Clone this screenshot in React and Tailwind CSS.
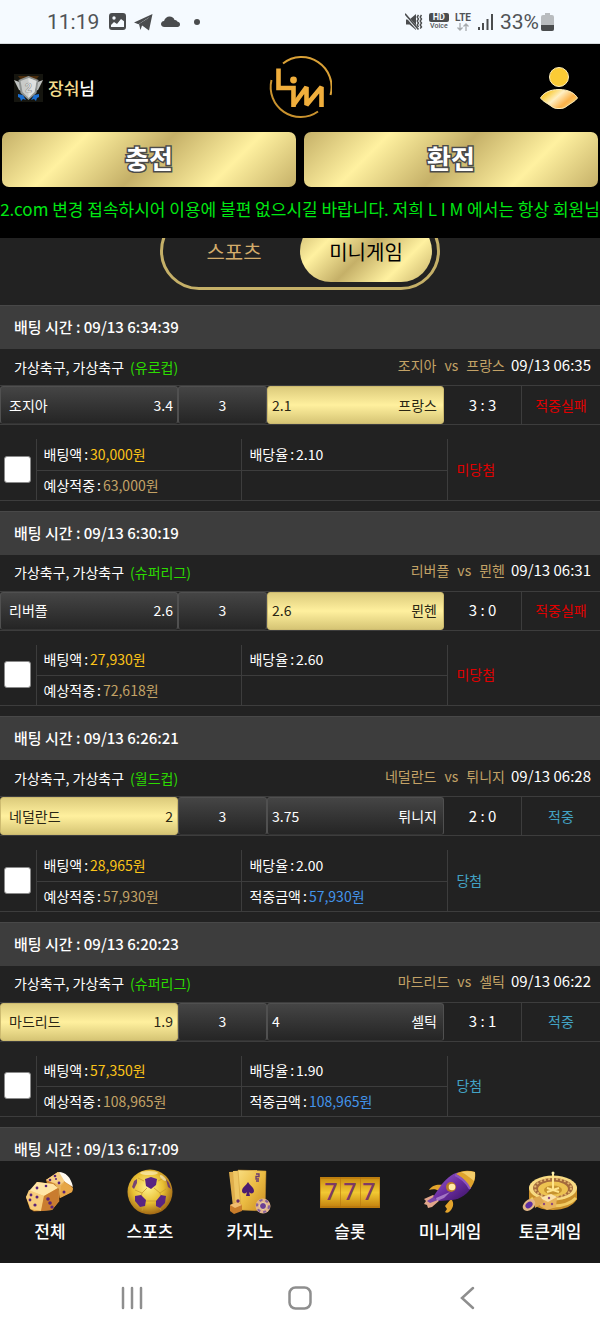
import React, { useState } from 'react';
import clsx from 'clsx';

const bets = [
  {
    id: 1, placedAt: '09/13 6:34:39', league: '유로컵', matchAt: '09/13 06:35',
    home: '조지아', away: '프랑스', homeOdds: '3.4', drawOdds: '3', awayOdds: '2.1',
    pick: 'away', score: '3 : 3', won: false,
    stake: '30,000원', rate: '2.10', expected: '63,000원',
  },
  {
    id: 2, placedAt: '09/13 6:30:19', league: '슈퍼리그', matchAt: '09/13 06:31',
    home: '리버플', away: '뮌헨', homeOdds: '2.6', drawOdds: '3', awayOdds: '2.6',
    pick: 'away', score: '3 : 0', won: false,
    stake: '27,930원', rate: '2.60', expected: '72,618원',
  },
  {
    id: 3, placedAt: '09/13 6:26:21', league: '월드컵', matchAt: '09/13 06:28',
    home: '네덜란드', away: '튀니지', homeOdds: '2', drawOdds: '3', awayOdds: '3.75',
    pick: 'home', score: '2 : 0', won: true,
    stake: '28,965원', rate: '2.00', expected: '57,930원', payout: '57,930원',
  },
  {
    id: 4, placedAt: '09/13 6:20:23', league: '슈퍼리그', matchAt: '09/13 06:22',
    home: '마드리드', away: '셀틱', homeOdds: '1.9', drawOdds: '3', awayOdds: '4',
    pick: 'home', score: '3 : 1', won: true,
    stake: '57,350원', rate: '1.90', expected: '108,965원', payout: '108,965원',
  },
];

function StatusBar() {
  return (
    <div className="h-11 shrink-0 flex items-center justify-between pl-[47px] pr-[46px] bg-[#f5faff] border-b border-[#d5dadd] text-[#505356] font-[Roboto,sans-serif]">
      <div className="flex items-center gap-2">
        <span className="text-[21px] leading-6 mr-[2px]">11:19</span>
        <svg width="17" height="17" viewBox="0 0 17 17">
          <rect x="1" y="1" width="15" height="15" rx="2" fill="none" stroke="#4a4c4e" strokeWidth="2" />
          <path d="M1 1h15v8l-4-3-4 5-3-2-4 4z" fill="#4a4c4e" />
          <circle cx="5" cy="5" r="1.7" fill="#f5faff" />
          <path d="M2.500 13.500 5 10.500l2.500 2 4-5 3 3v3.500h-12z" fill="#f5faff" />
          <path d="M1 15h15" stroke="#4a4c4e" strokeWidth="2" />
        </svg>
        <svg width="19" height="18" viewBox="0 0 19 18" fill="#4a4c4e">
          <path d="M18.500 1 0 9.500l4.500 1.700L15.500 4 7.500 12l7.500 5.500z" />
          <path d="M5 11 16 4 8 12.500 6.500 17z" />
        </svg>
        <svg width="19" height="12" viewBox="0 0 19 12" fill="#4a4c4e">
          <path d="M3.500 11C1 11 0 9.500 0 8s1.200-2.800 3-3C4 2 6 .5 8.500.5S13 2 13.500 4c1.500-.3 2.500.5 2.800 1.600C18 6 19 7 19 8.500S18 11 16.500 11z" />
        </svg>
        <span className="w-[6px] h-[6px] ml-[6px] rounded-full bg-[#4a4c4e]" />
      </div>
      <div className="flex items-center gap-[6px]">
        <svg width="18" height="18" viewBox="0 0 18 18" fill="#4a4c4e">
          <path d="M1 6.500h3.500L11 1v16l-6.500-5.500H1z" />
          <path d="m0 1.500 13 15" stroke="#f5faff" strokeWidth="2.600" />
          <path d="m0 .8 13.500 15.700" stroke="#4a4c4e" strokeWidth="1.600" />
          <path d="m13.500 2-1.300 2 1.300 2-1.300 2 1.300 2-1.300 2 1.300 2M16.500 2l-1.300 2 1.300 2-1.300 2 1.300 2-1.300 2 1.300 2-1.300 1.500" fill="none" stroke="#4a4c4e" strokeWidth="1.400" />
        </svg>
        <div className="flex flex-col items-center">
          <span className="w-5 h-[9px] rounded-xs bg-[#4a4c4e] text-[#f5faff] text-[9px] leading-[9px] font-bold text-center">HD</span>
          <span className="text-[7px] leading-2 font-medium">Voice</span>
        </div>
        <div className="flex flex-col items-center">
          <span className="text-[10px] leading-[10px] font-bold">LTE</span>
          <svg width="12" height="8" viewBox="0 0 12 8" fill="none" stroke="#a6aaad" strokeWidth="1.300">
            <path d="M3 0v7M.5 4.500 3 7l2.500-2.500M9 8V1M6.500 3.500 9 1l2.500 2.500" />
          </svg>
        </div>
        <svg width="17" height="17" viewBox="0 0 17 17" fill="#4a4c4e">
          <rect x="1" y="14" width="2" height="3" />
          <rect x="5" y="10" width="2" height="7" />
          <rect x="9.500" y="6" width="2" height="11" />
          <rect x="14" y="1" width="2" height="16" />
        </svg>
        <span className="flex items-center gap-[2px] text-[21px] leading-6">
          33%
          <svg width="13" height="18" viewBox="0 0 13 18">
            <path d="M4 0h5v2h2a2 2 0 0 1 2 2v12a2 2 0 0 1-2 2H2a2 2 0 0 1-2-2V4a2 2 0 0 1 2-2h2z" fill="#b9bcbf" />
            <path d="M0 12h13v4a2 2 0 0 1-2 2H2a2 2 0 0 1-2-2z" fill="#4a4c4e" />
          </svg>
        </span>
      </div>
    </div>
  );
}

function RankBadge() {
  return (
    <svg width="29" height="28" viewBox="0 0 29 28">
      <rect width="29" height="28" fill="#15150f" />
      <path d="M4 2h21l-4 5H8z" fill="#4a2c0c" />
      <path d="m0 6 8 3 2 9-5-2z" fill="#bfc2c0" />
      <path d="m29 6-8 3-2 9 5-2z" fill="#bfc2c0" />
      <path d="m4 20 5 1 3 5-3-1-2 2-1-3-2-1zM25 20l-5 1-3 5 3-1 2 2 1-3 2-1z" fill="#1c6fd0" />
      <path d="m14.500 2 10 4-2 13-8 7-8-7-2-13z" fill="#8f9391" />
      <path d="m14.500 4 8 3-2 11-6 6-6-6-2-11z" fill="#c9cbc9" />
      <path d="m14.500 4 8 3-2 11-6 6z" fill="#dfe1df" />
      <text x="14.500" y="17.500" textAnchor="middle" fontSize="12" fontWeight="700" fill="#f7f7f5" stroke="#8a8d8b" strokeWidth=".6" fontFamily="Roboto, sans-serif">2</text>
    </svg>
  );
}

function Logo() {
  return (
    <svg width="64" height="68" viewBox="8 4 64 68" fill="none" stroke="#f0ae3c">
      <path d="M23 13.500A30 30 0 0 1 70.500 45" strokeWidth="2" stroke="#d9a036" />
      <path d="M11.500 30A30 30 0 0 0 58 61.500" strokeWidth="2" stroke="#c9922e" />
      <path d="M18.500 18.500V38H33.500V57" strokeWidth="4.600" />
      <path d="M33.500 55 46.500 37V55L61.500 37V57" strokeWidth="4.600" strokeLinejoin="bevel" />
      <circle cx="33.500" cy="30" r="3.400" fill="#f0ae3c" stroke="none" />
    </svg>
  );
}

function ProfileIcon() {
  return (
    <svg width="38" height="42" viewBox="0 0 38 42">
      <defs>
        <linearGradient id="body" x1="0" y1="0" x2="1" y2=".6">
          <stop offset="0" stopColor="#fbc02a" />
          <stop offset=".25" stopColor="#fad04a" />
          <stop offset=".5" stopColor="#fff0c4" />
          <stop offset=".8" stopColor="#fbb24a" />
          <stop offset="1" stopColor="#f8cf70" />
        </linearGradient>
      </defs>
      <circle cx="19" cy="10" r="9.500" fill="#fbcb35" stroke="#fff0bd" />
      <path d="M.5 31C3 26.500 9 22.500 19 22.500S35 26.500 37.500 31C35 34.500 31 36 27 39c-3 2.500-5 2.500-8 2.500S14 41.500 11 39C7 36 3 34.500 .5 31z" fill="url(#body)" stroke="#fff0bd" />
    </svg>
  );
}

function Header() {
  return (
    <header className="shrink-0 bg-black">
      <div className="h-[88px] grid grid-cols-3 items-center px-[14px]">
        <div className="flex items-center gap-[5px] text-[17px] font-medium">
          <RankBadge />
          <span><span className="text-[#f3dc8e]">장숴</span>님</span>
        </div>
        <a href="#home" aria-label="LIM" className="justify-self-center"><Logo /></a>
        <button type="button" aria-label="내 정보" className="justify-self-end pr-2"><ProfileIcon /></button>
      </div>
      <div className="flex gap-2 px-[2px]">
        <MoneyButton label="충전" />
        <MoneyButton label="환전" />
      </div>
      <div className="h-[51px] pt-[9px] overflow-hidden flex justify-center">
        <p className="shrink-0 whitespace-nowrap text-[17px] leading-[26px] text-[#00e813]">
          2.com 변경 접속하시어 이용에 불편 없으시길 바랍니다. 저희 L I M 에서는 항상 회원님
        </p>
      </div>
    </header>
  );
}

function MoneyButton({ label }) {
  return (
    <button
      type="button"
      className="flex-1 h-[55px] pb-1 rounded-[7px] bg-[linear-gradient(135deg,#c5b068_0%,#fff1a0_25%,#c5b068_50%,#fff1a0_75%,#c5b068_100%)] text-[26px] font-bold text-white [-webkit-text-stroke:3px_#4b4b4b] [paint-order:stroke_fill]"
    >
      {label}
    </button>
  );
}

function Tabs({ active, onChange }) {
  return (
    <div className="-mt-[26px] mb-[15px] mx-auto w-[280px] h-[78px] flex p-[5px] rounded-full border-[3px] border-[#c5b068]">
      {['스포츠', '미니게임'].map((tab) => (
        <button
          key={tab}
          type="button"
          onClick={() => onChange(tab)}
          className={clsx(
            'flex-1 pt-[2px] rounded-full text-[20px]',
            active === tab
              ? 'text-black bg-[linear-gradient(135deg,#c5b068_0%,#fff1a0_25%,#c5b068_50%,#fff1a0_75%,#c5b068_100%)]'
              : 'text-[#d3ac6b]'
          )}
        >
          {tab}
        </button>
      ))}
    </div>
  );
}

function OddsButton({ selected, className, children }) {
  return (
    <button
      type="button"
      className={clsx(
        'h-full flex items-center rounded-[3px] border text-[14px]',
        selected
          ? 'border-[#cdbb70] bg-[linear-gradient(#dccb7c,#fff09e_50%,#d6c575)] text-[#2a2614]'
          : 'border-[#505050] border-b-[#333] bg-linear-to-b from-[#454545] to-[#252525]',
        className
      )}
    >
      {children}
    </button>
  );
}

function BetTitle({ time }) {
  return (
    <h2 className="h-11 pl-[14px] flex items-center bg-[#3d3d3d] border-t border-[#484848] text-[15px] font-medium">
      배팅 시간 : {time}
    </h2>
  );
}

function BetCard({ bet }) {
  const resultColor = bet.won ? 'text-[#43a3c4]' : 'text-[#e00000]';

  return (
    <article className="pb-[10px]">
      <BetTitle time={bet.placedAt} />

      <div className="h-9 pl-[14px] pr-[9px] flex items-center justify-between">
        <div className="flex gap-[6px] text-[14px]">
          <span>가상축구, 가상축구</span>
          <span className="text-[#2cdb00]">({bet.league})</span>
        </div>
        <div className="flex items-baseline gap-[6px] pb-1">
          <span className="flex gap-2 text-[14px] text-[#c3a266]">
            <span>{bet.home}</span>
            <span>vs</span>
            <span>{bet.away}</span>
          </span>
          <span className="text-[15px]">{bet.matchAt}</span>
        </div>
      </div>

      <div className="h-10 grid grid-cols-[178fr_89fr_177fr_78fr_78fr] border-y border-[#3d3d3d]">
        <OddsButton selected={bet.pick === 'home'} className="justify-between pl-2 pr-1">
          <span>{bet.home}</span>
          <span>{bet.homeOdds}</span>
        </OddsButton>
        <OddsButton className="justify-center">{bet.drawOdds}</OddsButton>
        <OddsButton selected={bet.pick === 'away'} className="justify-between pl-1 pr-[6px]">
          <span>{bet.awayOdds}</span>
          <span>{bet.away}</span>
        </OddsButton>
        <div className="flex items-center justify-center border-r border-[#3d3d3d] text-[15px]">{bet.score}</div>
        <div className={clsx('flex items-center justify-center text-[14px]', resultColor)}>
          {bet.won ? '적중' : '적중실패'}
        </div>
      </div>

      <table className="mt-[14px] w-full table-fixed border-collapse border-b border-[#3d3d3d] text-[14px]">
        <colgroup>
          <col className="w-[36px]" />
          <col className="w-[34.333%]" />
          <col className="w-[34.333%]" />
          <col />
        </colgroup>
        <tbody>
          <tr className="h-[31px]">
            <td rowSpan={2} className="p-0 pl-1 border-r border-[#3d3d3d]">
              <input
                type="checkbox"
                aria-label={`배팅 ${bet.placedAt} 선택`}
                className="block appearance-none w-[27px] h-[27px] rounded-[3px] bg-white border border-[#8b8b8b] checked:bg-[#fff09e]"
              />
            </td>
            <Cell label="배팅액" value={bet.stake} color="text-[#fcc419]" top />
            <Cell label="배당율" value={bet.rate} top />
            <td rowSpan={2} className={clsx('p-0 pl-2', resultColor)}>{bet.won ? '당첨' : '미당첨'}</td>
          </tr>
          <tr className="h-[30px]">
            <Cell label="예상적중" value={bet.expected} color="text-[#c3a266]" />
            <Cell label={bet.payout && '적중금액'} value={bet.payout} color="text-[#4394ea]" />
          </tr>
        </tbody>
      </table>
    </article>
  );
}

function Cell({ label, value, color, top }) {
  return (
    <td className={clsx('p-0 pl-[7px] border-r border-[#3d3d3d]', top && 'border-b')}>
      {label && (
        <span className="flex items-center gap-[2px]">
          <span>{label}</span>
          <span>:</span>
          <span className={color}>{value}</span>
        </span>
      )}
    </td>
  );
}

// Gold gradients shared by the bottom menu icons
function IconDefs() {
  return (
    <svg width="0" height="0" className="absolute" aria-hidden="true">
      <defs>
        <linearGradient id="gold" x1="0" y1="0" x2="1" y2="1">
          <stop offset="0" stopColor="#f9dd80" />
          <stop offset=".5" stopColor="#eabb42" />
          <stop offset="1" stopColor="#c88a20" />
        </linearGradient>
        <radialGradient id="ball" cx=".45" cy=".4" r=".62">
          <stop offset="0" stopColor="#fff08c" />
          <stop offset=".55" stopColor="#e9c034" />
          <stop offset="1" stopColor="#9c6213" />
        </radialGradient>
        <linearGradient id="reel" x1="0" y1="0" x2="0" y2="1">
          <stop offset="0" stopColor="#c88a10" />
          <stop offset=".5" stopColor="#f2c832" />
          <stop offset="1" stopColor="#c07d0c" />
        </linearGradient>
        <linearGradient id="hull" x1="0" y1="0" x2="1" y2="1">
          <stop offset="0" stopColor="#9a62d0" />
          <stop offset=".5" stopColor="#6a2ca0" />
          <stop offset="1" stopColor="#37115e" />
        </linearGradient>
      </defs>
    </svg>
  );
}

function DiceIcon() {
  return (
    <svg width="48" height="42" viewBox="0 0 48 42">
      <path d="m32 1 8 3 7 14-1 3-12 6-10-4-4-14z" fill="#c98031" />
      <path d="M32 1 20 9l9 4 5 13 6-12z" fill="#e9b25a" />
      <path d="m32 1-12 8 14 5 8-7-4-4z" fill="#f7cf84" />
      <path d="M33 1c6 0 12 5 14 15l-8-5z" fill="#fffaf0" />
      <path d="m39 11 8 6-1 4-12 6 1-12z" fill="#e6a545" />
      <g fill="#5a2378">
        <circle cx="29" cy="5" r="1.300" /><circle cx="24" cy="9" r="1.300" /><circle cx="33" cy="12" r="1.400" /><circle cx="30" cy="8" r="1" /><circle cx="38" cy="21" r="1.500" />
      </g>
      <path d="m11 11 18 3 4 4 1 12-8 9-18 2-4-3L0 27z" fill="#8a4a14" opacity=".55" />
      <path d="m11 11 16 2 5 4 1 13-7 9-18 1-4-2L0 26z" fill="#f0b452" />
      <path d="m11 11 16 2 5 4-14 8L3 20z" fill="#ffe5a6" />
      <path d="M3 19 18 25 15 40 5 38 0 26z" fill="#f8cd7c" />
      <path d="m18 25 14-8 1 13-7 9-11 1z" fill="#c97c2f" />
      <g fill="#5a2378">
        <circle cx="11" cy="17" r="1.400" /><circle cx="20" cy="15" r="1.300" /><circle cx="5" cy="24" r="1.400" /><circle cx="11" cy="26" r="1.500" /><circle cx="4" cy="29" r="1.400" /><circle cx="9" cy="34" r="1.600" />
        <circle cx="22" cy="28" r="1.800" /><circle cx="24" cy="32" r="1.800" /><circle cx="26" cy="36" r="1.600" />
      </g>
    </svg>
  );
}

function BallIcon() {
  return (
    <svg width="46" height="46" viewBox="0 0 46 46">
      <circle cx="23" cy="23" r="22.500" fill="url(#ball)" />
      <path d="M20 19l-5 5-1 4M27 19l6 5 1 4M18 32h11M15 24l-7-3M33 24l6-4M17 12l-6-3M31 12l6-3M16 38l-1 4M32 38l2 3" fill="none" stroke="#c89a30" strokeWidth=".8" />
      <g fill="#592482">
        <path d="m18 10 6-2 6 2-1 6-5 4-5-3z" />
        <path d="m8 27 6-1 5 5-1 6-5 1-5-6z" />
        <path d="m29 32 5-6 5 1-1 7-5 5-4-2z" />
        <path d="m5 18 2-6 3-2v4l-3 6z" opacity=".8" />
        <path d="m39 10 3 4 2 6-3-2z" opacity=".8" />
      </g>
      <ellipse cx="22" cy="4" rx="9" ry="2" fill="#fff9d8" opacity=".55" />
      <ellipse cx="36" cy="9" rx="4" ry="1.500" fill="#fff" opacity=".5" transform="rotate(45 36 9)" />
    </svg>
  );
}

function CardsIcon() {
  return (
    <svg width="42" height="46" viewBox="0 0 42 46">
      <path d="m0 3 22-1 2 34-20 2z" fill="#dfae4c" />
      <path d="m4 2 24-1 2 36-23 2z" fill="#efc765" />
      <path d="m9 1 28 1-1 40-24-1z" fill="url(#gold)" stroke="#c99435" strokeWidth=".5" />
      <path d="M19 13c2 4 6 5 6 9 0 3-4 3-5 1l1 4h-4l1-4c-1 2-5 2-5-1 0-4 4-5 6-9z" fill="#4a1c70" />
      <path d="M27 5h3v2.500h-3V10h3M27 12h3" stroke="#6a3a70" strokeWidth="1.300" fill="none" />
      <path d="m1 36 7-3 5 3v6l-8 3-4-3z" fill="#c97d2b" />
      <path d="m1 36 7-3 5 3-7 3z" fill="#f0bd70" />
      <circle cx="9" cy="32" r="1.700" fill="#6a2c66" />
      <circle cx="34" cy="37" r="7.500" fill="#e3b58c" />
      <circle cx="34" cy="37" r="6" fill="none" stroke="#86609c" strokeWidth="2.200" strokeDasharray="3 3" />
      <circle cx="34" cy="37" r="3.500" fill="#6b3f94" stroke="#f5dca6" />
    </svg>
  );
}

function SlotIcon() {
  return (
    <svg width="60" height="31" viewBox="0 0 60 31">
      <rect width="60" height="31" fill="url(#reel)" />
      <path d="M.5 0v31M20.500 0v31M40.500 0v31M59.500 0v31" stroke="#b9770f" opacity=".6" />
      <path d="M0 1h60M0 30h60" stroke="#b5750e" strokeWidth="2" opacity=".6" />
      <g fontFamily="Roboto, sans-serif" fontSize="23" fontWeight="500" fill="#7d3a63" textAnchor="middle">
        <text x="11" y="23">7</text>
        <text x="30" y="23">7</text>
        <text x="49" y="23">7</text>
      </g>
    </svg>
  );
}

function RocketIcon() {
  return (
    <svg width="52" height="44" viewBox="0 0 52 44">
      <path d="M5 20c3-5 8-6 15-5l-5 6c-3-2-6-2-10-1z" fill="#e3a42c" />
      <path d="M27 29c4 4 2 10-2 13-1 1-3 1-4 0l2-3-2-3z" fill="#e3a42c" />
      <path d="m9 25-9 4 2 2-2 3 3 1 1 3 4-1 8-7z" fill="#e0a68a" />
      <path d="m11 26-8 5 3 2 8-3z" fill="#7945a8" />
      <path d="M9 27 18 14c6-7 12-12 19-12l11 14c-3 7-11 13-20 14l-13 1z" fill="url(#hull)" />
      <path d="M32 4c6-4 13-4 19-2 1 6-1 12-5 17-3-7-8-12-14-15z" fill="#dfa32c" />
      <path d="M37 2c5-1 9-1 14 0 0 4 0 6-1 9C46 8 42 4 37 2z" fill="#ffe28a" opacity=".65" />
      <path d="M31 5c7 3 12 8 15 14" fill="none" stroke="#8c55c0" strokeWidth="2" />
      <circle cx="27" cy="17" r="5" fill="#b97a28" />
      <circle cx="28" cy="17" r="3.300" fill="#ffe9a8" />
      <path d="m12 28 14-6-6 6-7 3z" fill="#e4c4ee" opacity=".5" />
    </svg>
  );
}

function RouletteIcon() {
  return (
    <svg width="56" height="42" viewBox="0 0 56 42">
      <path d="M7 16v12c4 8 13 11 24 11s20-4 24-11V16z" fill="#c9902b" />
      <path d="M9 27c6 6 13 8 22 8s17-2 23-8" fill="none" stroke="#f1cb62" strokeWidth="3" />
      <ellipse cx="31" cy="17" rx="24" ry="12.500" fill="#f8db83" />
      <ellipse cx="31" cy="17" rx="20" ry="10" fill="#a46a3c" />
      <ellipse cx="31" cy="17" rx="18" ry="9" fill="none" stroke="#e2b66c" strokeWidth="2" strokeDasharray="2 2" />
      <ellipse cx="31" cy="18" rx="15" ry="7.500" fill="#edc351" />
      <ellipse cx="31" cy="19" rx="9" ry="4.500" fill="#c69330" />
      <path d="M31 1v19M25 17l12 4M37 17l-12 4" stroke="#ffe58c" strokeWidth="2" />
      <circle cx="31" cy="2" r="1.500" fill="#fff2b0" />
      <path d="m18 27 11-4 6 3-1 10-9 3-7-4z" fill="#e8b45c" />
      <path d="m18 27 11-4 6 3-9 5z" fill="#fbe2aa" />
      <circle cx="27" cy="27" r="1.200" fill="#8d4a80" /><circle cx="22" cy="33" r="1.200" fill="#8d4a80" /><circle cx="30" cy="33" r="1.200" fill="#8d4a80" />
      <path d="m11 27 7-2 4 6-9 6z" fill="#dca650" />
      <ellipse cx="7" cy="34" rx="7" ry="5" fill="#e2b686" transform="rotate(-40 7 34)" />
      <ellipse cx="7" cy="34" rx="4" ry="2.800" fill="#5c2ea0" transform="rotate(-40 7 34)" />
    </svg>
  );
}

const menu = [
  { label: '전체', Icon: DiceIcon },
  { label: '스포츠', Icon: BallIcon },
  { label: '카지노', Icon: CardsIcon },
  { label: '슬롯', Icon: SlotIcon },
  { label: '미니게임', Icon: RocketIcon },
  { label: '토큰게임', Icon: RouletteIcon },
];

function BottomMenu() {
  return (
    <nav className="h-[102px] shrink-0 grid grid-cols-6 pt-2 bg-[#191919]">
      <IconDefs />
      {menu.map(({ label, Icon }) => (
        <a key={label} href="#menu" className="flex flex-col items-center gap-1 text-[17px] leading-6 font-medium">
          <span className="h-[46px] flex items-center"><Icon /></span>
          {label}
        </a>
      ))}
    </nav>
  );
}

function SystemNav() {
  return (
    <div className="h-[70px] shrink-0 grid grid-cols-[1fr_168px_168px_168px_1fr] items-center justify-items-center bg-white">
      <span />
      <button type="button" aria-label="최근 앱">
        <svg width="24" height="24" viewBox="0 0 24 24" stroke="#8e8e8e" strokeWidth="2.500" strokeLinecap="round">
          <path d="M3 2v20M12 2v20M21 2v20" />
        </svg>
      </button>
      <button type="button" aria-label="홈">
        <svg width="24" height="24" viewBox="0 0 24 24" fill="none" stroke="#8e8e8e" strokeWidth="2.500">
          <rect x="1.500" y="1.500" width="21" height="21" rx="6" />
        </svg>
      </button>
      <button type="button" aria-label="뒤로">
        <svg width="24" height="24" viewBox="0 0 24 24" fill="none" stroke="#8e8e8e" strokeWidth="2.500" strokeLinecap="round">
          <path d="M17 2 6 12l11 10" />
        </svg>
      </button>
    </div>
  );
}

export default function App() {
  const [tab, setTab] = useState('미니게임');

  return (
    <div className="h-screen flex flex-col bg-[#222] text-white font-['Noto_Sans_CJK_KR',sans-serif]">
      <StatusBar />
      <Header />
      <main className="flex-1 min-h-0 overflow-hidden">
        <Tabs active={tab} onChange={setTab} />
        {bets.map((bet) => <BetCard key={bet.id} bet={bet} />)}
        <BetTitle time="09/13 6:17:09" />
      </main>
      <BottomMenu />
      <SystemNav />
    </div>
  );
}
